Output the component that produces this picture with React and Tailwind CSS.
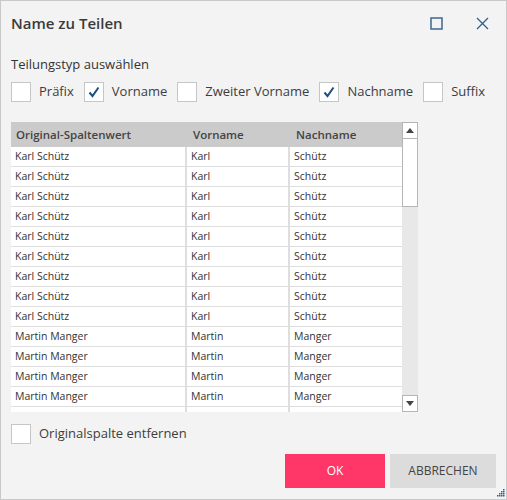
import React from "react";

const rows = [
  ...Array(9).fill(["Karl Schütz", "Karl", "Schütz"]),
  ...Array(5).fill(["Martin Manger", "Martin", "Manger"]),
];

function Box({ checked }) {
  return (
    <div className="w-5 h-5 shrink-0 bg-white border border-[#c6c6c6] flex items-center justify-center">
      {checked && (
        <svg width="14" height="14" viewBox="0 0 14 14">
          <path d="M2.5 7.5 L5.5 11 L11.5 2.5" fill="none" stroke="#1d4f7c" strokeWidth="2" />
        </svg>
      )}
    </div>
  );
}

function Opt({ label, checked }) {
  return (
    <div className="flex items-center gap-2">
      <Box checked={checked} />
      <span>{label}</span>
    </div>
  );
}

export default function App() {
  return (
    <div
      className="w-[507px] h-[500px] bg-[#f3f3f3] border border-[#c9c9c9] relative flex flex-col text-[#333333]"
      style={{ fontFamily: '"Open Sans", "Noto Sans", sans-serif' }}
    >
      <div className="h-[44px] flex items-center pl-[10px] pr-[17px]">
        <div className="text-[15px] font-semibold text-[#3a3a3a] flex-1">Name zu Teilen</div>
        <svg width="13" height="13" viewBox="0 0 13 13" className="mr-[33px]">
          <rect x="1" y="1" width="11" height="11" fill="none" stroke="#4a6f94" strokeWidth="1.6" />
        </svg>
        <svg width="13" height="13" viewBox="0 0 13 13">
          <path d="M1 1 L12 12 M12 1 L1 12" stroke="#2f5f8e" strokeWidth="1.3" />
        </svg>
      </div>
      <div className="px-[10px] text-[13px] mt-[10px] leading-[18px]">Teilungstyp auswählen</div>
      <div className="px-[10px] mt-[9px] flex items-center gap-[10px] text-[13px] text-[#3d3d3d]">
        <Opt label="Präfix" />
        <Opt label="Vorname" checked />
        <Opt label="Zweiter Vorname" />
        <Opt label="Nachname" checked />
        <Opt label="Suffix" />
      </div>
      <div className="ml-[10px] mt-[20px] w-[407px] h-[290px] flex bg-[#f3f3f3] overflow-hidden">
        <div className="flex-1 flex flex-col overflow-hidden">
          <div className="h-[25px] shrink-0 bg-[#cbcbcb] flex text-[11.5px] font-semibold text-[#444] items-center">
            <div className="w-[176px] pl-[5px]">Original-Spaltenwert</div>
            <div className="w-[103px] pl-[6px]">Vorname</div>
            <div className="flex-1 pl-[6px]">Nachname</div>
          </div>
          <div className="flex-1 overflow-hidden bg-[#dedede]">
            {rows.map((r, i) => (
              <div key={i} className="h-[20px] flex text-[10.5px] text-[#333] gap-[2px] pb-[1px]">
                <div className="w-[174px] bg-white pl-[4px] leading-[19px]">{r[0]}</div>
                <div className="w-[101px] bg-white pl-[4px] leading-[19px]">{r[1]}</div>
                <div className="flex-1 bg-white pl-[4px] leading-[19px]">{r[2]}</div>
              </div>
            ))}
          </div>
        </div>
        <div className="w-[16px] bg-[#e8e8e8] flex flex-col relative">
          <div className="h-[17px] bg-white border border-[#b5b5b5] flex items-center justify-center">
            <svg width="8" height="5" viewBox="0 0 8 5"><path d="M0 5 L4 0 L8 5 Z" fill="#444" /></svg>
          </div>
          <div className="h-[68px] bg-white border border-[#b5b5b5] border-t-0" />
          <div className="flex-1" />
          <div className="h-[17px] bg-white border border-[#b5b5b5] flex items-center justify-center">
            <svg width="8" height="5" viewBox="0 0 8 5"><path d="M0 0 L8 0 L4 5 Z" fill="#444" /></svg>
          </div>
        </div>
      </div>
      <div className="px-[10px] mt-[12px] flex items-center gap-2 text-[13px] text-[#3d3d3d]">
        <Box />
        <span>Originalspalte entfernen</span>
      </div>
      <div className="flex justify-end gap-[5px] mt-[10px] pr-[10px]">
        <button className="w-[100px] h-[34px] bg-[#fe3768] text-white text-[12px]">OK</button>
        <button className="w-[106px] h-[34px] bg-[#dcdcdc] text-[#444] text-[12px]">ABBRECHEN</button>
      </div>
      <svg width="9" height="9" viewBox="0 0 9 9" className="absolute right-[1px] bottom-[2px]">
        {[[7,1],[7,3],[5,3],[7,5],[5,5],[3,5],[7,7],[5,7],[3,7],[1,7]].map(([x,y],i)=>(
          <rect key={i} x={x} y={y} width="1.5" height="1.5" fill="#3a5f86" />
        ))}
      </svg>
    </div>
  );
}
